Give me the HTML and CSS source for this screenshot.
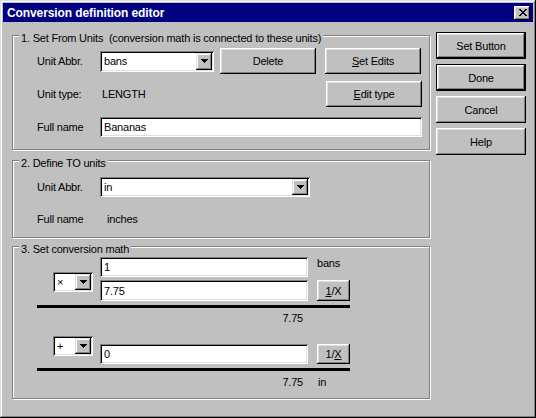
FILE: index.html
```html
<!DOCTYPE html>
<html lang="en">
<head>
<meta charset="UTF-8">
<title>Conversion definition editor</title>
<link rel="stylesheet" href="styles.css">
</head>
<body>
<div class="window">
  <div class="titlebar">
    <span class="title">Conversion definition editor</span>
    <button class="close-btn" aria-label="Close">
      <svg width="8" height="7" viewBox="0 0 8 7" shape-rendering="crispEdges"><path d="M0 0h2v1H0zM6 0h2v1H6zM1 1h2v1H1zM5 1h2v1H5zM2 2h4v1H2zM3 3h2v1H3zM2 4h4v1H2zM1 5h2v1H1zM5 5h2v1H5zM0 6h2v1H0zM6 6h2v1H6z" fill="#000"/></svg>
    </button>
  </div>

  <div class="content">
    <div class="groups">
      <!-- source unit -->
      <div class="group group-from">
        <div class="group-title">1. Set From Units&nbsp; (conversion math is connected to these units)</div>
        <div class="row row-from-abbr">
          <span class="label">Unit Abbr.</span>
          <div class="combo combo-from">
            <span class="combo-text">bans</span>
            <span class="combo-arrow"><svg width="7" height="4" viewBox="0 0 7 4" shape-rendering="crispEdges"><path d="M0 0h7v1H0zM1 1h5v1H1zM2 2h3v1H2zM3 3h1v1H3z" fill="#000"/></svg></span>
          </div>
          <button class="btn btn-delete">Delete</button>
          <button class="btn btn-edits"><u>S</u>et Edits</button>
        </div>
        <div class="row row-type">
          <span class="label">Unit type:</span>
          <span class="value value-type">LENGTH</span>
          <button class="btn btn-edit-type"><u>E</u>dit type</button>
        </div>
        <div class="row row-name">
          <span class="label">Full name</span>
          <input class="field field-name" type="text" value="Bananas">
        </div>
      </div>

      <!-- target unit -->
      <div class="group group-to">
        <div class="group-title">2. Define TO units</div>
        <div class="row row-to-abbr">
          <span class="label">Unit Abbr.</span>
          <div class="combo combo-to">
            <span class="combo-text">in</span>
            <span class="combo-arrow"><svg width="7" height="4" viewBox="0 0 7 4" shape-rendering="crispEdges"><path d="M0 0h7v1H0zM1 1h5v1H1zM2 2h3v1H2zM3 3h1v1H3z" fill="#000"/></svg></span>
          </div>
        </div>
        <div class="row row-to-name">
          <span class="label">Full name</span>
          <span class="value value-inches">inches</span>
        </div>
      </div>

      <!-- math -->
      <div class="group group-math">
        <div class="group-title">3. Set conversion math</div>

        <div class="math-row math-top">
          <span class="op-slot"></span>
          <input class="field num-field" type="text" value="1">
          <span class="side unit">bans</span>
        </div>
        <div class="math-row math-mul">
          <span class="op-slot">
            <span class="combo combo-op combo-op-mul">
              <span class="combo-text">×</span>
              <span class="combo-arrow"><svg width="7" height="4" viewBox="0 0 7 4" shape-rendering="crispEdges"><path d="M0 0h7v1H0zM1 1h5v1H1zM2 2h3v1H2zM3 3h1v1H3z" fill="#000"/></svg></span>
            </span>
          </span>
          <input class="field num-field num-tall" type="text" value="7.75">
          <button class="btn side btn-recip btn-recip-tall"><u>1</u>/X</button>
        </div>
        <div class="math-line"></div>
        <div class="math-result result-mul">
          <span class="result-value">7.75</span>
        </div>

        <div class="math-row math-add">
          <span class="op-slot">
            <span class="combo combo-op">
              <span class="combo-text">+</span>
              <span class="combo-arrow"><svg width="7" height="4" viewBox="0 0 7 4" shape-rendering="crispEdges"><path d="M0 0h7v1H0zM1 1h5v1H1zM2 2h3v1H2zM3 3h1v1H3z" fill="#000"/></svg></span>
            </span>
          </span>
          <input class="field num-field num-low" type="text" value="0">
          <button class="btn side btn-recip num-low">1/<u>X</u></button>
        </div>
        <div class="math-line"></div>
        <div class="math-result result-add">
          <span class="result-value">7.75</span>
          <span class="result-unit">in</span>
        </div>
      </div>
    </div>

    <div class="side-buttons">
      <button class="btn btn-default side-btn">Set Button</button>
      <button class="btn btn-default side-btn">Done</button>
      <button class="btn side-btn">Cancel</button>
      <button class="btn side-btn">Help</button>
    </div>
  </div>
</div>
</body>
</html>
```

FILE: styles.css
```css
* { box-sizing: border-box; }
body { margin: 0; font-family: "Liberation Sans", Arial, sans-serif; font-size: 11px; letter-spacing: -0.2px; color: #000; background: #c0c0c0; }

/* window frame */
.window { width: 536px; height: 418px; padding: 3px; background: #c0c0c0; box-shadow: inset -1px -1px #000, inset 1px 1px #dfdfdf, inset -2px -2px #808080, inset 2px 2px #fff; }
.titlebar { height: 19px; display: flex; align-items: center; padding: 0 3px 0 4px; background: #000080; color: #fff; }
.title { flex: 1; font-weight: bold; font-size: 12px; letter-spacing: -0.1px; }
.close-btn { width: 16px; height: 14px; padding: 0 0 0 1px; border: none; background: #c0c0c0; display: flex; align-items: center; justify-content: center; box-shadow: inset -1px -1px #000, inset 1px 1px #fff, inset -2px -2px #808080, inset 2px 2px #dfdfdf; }

.content { display: flex; padding: 10px 0 0 9px; }
.groups { width: 418px; }

/* etched group boxes */
.group { border: 1px solid #808080; box-shadow: 1px 1px #fff, inset 1px 1px #fff; padding: 0 7px 12px 24px; }
.group-title { width: max-content; margin: -4px 0 0 -18px; padding: 0 2px; line-height: 13px; background: #c0c0c0; }
.group-from { margin-top: 3px; }
.group-to { margin-top: 10px; padding-bottom: 10px; }
.group-math { margin-top: 8px; padding-bottom: 9px; }

.row { display: flex; align-items: center; }
.label { width: 63px; flex: none; }
.value-type { padding-left: 2px; }
.value-inches { padding-left: 7px; }

.row-from-abbr { margin-top: 3px; height: 26px; }
.row-type { margin-top: 7px; height: 26px; }
.row-name { margin-top: 10px; height: 20px; }
.row-to-abbr { margin-top: 7px; height: 20px; }
.row-to-name { margin-top: 14px; height: 16px; }

/* 3D buttons */
.btn { font: inherit; letter-spacing: inherit; color: #000; background: #c0c0c0; border: none; padding: 0; box-shadow: inset -1px -1px #000, inset 1px 1px #fff, inset -2px -2px #808080, inset 2px 2px #dfdfdf; }
.btn-default { border: 1px solid #000; }
.btn-delete { width: 96px; height: 26px; margin-left: 6px; }
.btn-edits { width: 96px; height: 26px; margin-left: 9px; }
.btn-edit-type { width: 96px; height: 26px; margin-left: auto; }

/* sunken text fields */
.field { font: inherit; letter-spacing: inherit; color: #000; background: #fff; border: none; outline: none; padding: 0 4px; height: 20px; box-shadow: inset 1px 1px #808080, inset -1px -1px #fff, inset 2px 2px #000, inset -2px -2px #dfdfdf; }
.field-name { flex: 1; min-width: 0; }

/* drop-down combos */
.combo { display: flex; padding: 2px; background: #fff; box-shadow: inset 1px 1px #808080, inset -1px -1px #fff, inset 2px 2px #000, inset -2px -2px #dfdfdf; }
.combo-text { flex: 1; display: flex; align-items: center; padding-left: 2px; }
.combo-arrow { width: 16px; flex: none; display: flex; align-items: center; justify-content: center; background: #c0c0c0; box-shadow: inset -1px -1px #000, inset 1px 1px #dfdfdf, inset -2px -2px #808080, inset 2px 2px #fff; }
.combo-from { width: 114px; height: 21px; }
.combo-to { width: 210px; height: 20px; }
.combo-op { width: 40px; height: 20px; }

/* conversion math */
.math-row { display: flex; align-items: flex-start; }
.op-slot { width: 40px; flex: none; margin: 0 7px 0 16px; }
.num-field { width: 208px; flex: none; }
.side { margin-left: 9px; }
.unit { line-height: 13px; }
.btn-recip { width: 33px; height: 20px; }
.btn-recip-tall { height: 21px; }
.num-tall { height: 21px; }
.math-top { margin-top: 1px; }
.math-mul { margin-top: 3px; }
.combo-op-mul { margin-top: -8px; }
.math-add { margin-top: 11px; }
.num-low { margin-top: 8px; }
.math-line { width: 313px; height: 3px; margin-top: 4px; background: #000; }
.math-result { display: flex; line-height: 13px; }
.result-mul { margin-top: 4px; }
.result-add { margin-top: 5px; }
.result-value { width: 208px; margin-left: 63px; padding-right: 5px; text-align: right; }
.result-unit { margin-left: 10px; }

/* right-hand command buttons */
.side-buttons { display: flex; flex-direction: column; gap: 5px; margin-left: 6px; }
.side-btn { width: 90px; height: 27px; }
```
